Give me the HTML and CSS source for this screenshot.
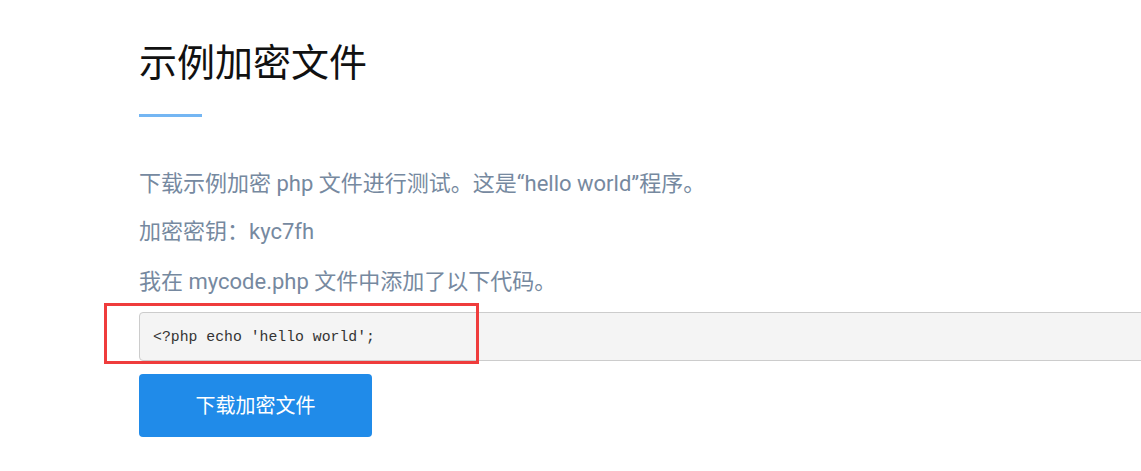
FILE: index.html
```html
<!DOCTYPE html>
<html lang="zh-CN">
<head>
<meta charset="utf-8">
<title>示例加密文件</title>
<link rel="stylesheet" href="styles.css">
</head>
<body>
<main class="section">
  <h1 class="title">示例加密文件</h1>
  <div class="title-bar"></div>
  <p class="text">下载示例加密 php 文件进行测试。这是“hello world”程序。</p>
  <p class="text text-key">加密密钥：kyc7fh</p>
  <p class="text text-last">我在 mycode.php 文件中添加了以下代码。</p>
  <div class="code-wrap">
    <pre class="code">&lt;?php echo 'hello world';</pre>
    <div class="highlight"></div>
  </div>
  <a class="btn" href="#">下载加密文件</a>
</main>
</body>
</html>
```

FILE: styles.css
```css
html, body {
  margin: 0;
  padding: 0;
  background: #ffffff;
  overflow: hidden;
}

body {
  font-family: Roboto, "Noto Sans CJK SC", sans-serif;
}

.section {
  padding: 40px 0 0 139px;
  width: 1100px;
}

.title {
  margin: 0;
  font-size: 38px;
  line-height: 46px;
  font-weight: 400;
  color: #111111;
}

.title-bar {
  margin-top: 28px;
  width: 63px;
  height: 3px;
  background: #74b6f3;
  margin-bottom: 52px;
}

.text {
  margin: 0 0 18px;
  font-size: 22px;
  line-height: 30px;
  color: #7689a0;
}

.text-key {
  margin-bottom: 20px;
}

.text-last {
  margin-bottom: 15px;
}

.code-wrap {
  position: relative;
}

.code {
  margin: 0;
  padding: 14px 13px 12px;
  border: 1px solid #cccccc;
  border-radius: 4px;
  background: #f4f4f4;
  font-family: "Liberation Mono", "DejaVu Sans Mono", monospace;
  font-size: 14.8px;
  line-height: 21px;
  color: #333333;
}

.highlight {
  position: absolute;
  left: -35px;
  top: -9px;
  width: 375px;
  height: 61px;
  box-sizing: border-box;
  border: 3px solid #ef3c3c;
}

.btn {
  display: flex;
  align-items: center;
  justify-content: center;
  margin-top: 13px;
  padding-bottom: 3px;
  box-sizing: border-box;
  width: 233px;
  height: 63px;
  border-radius: 4px;
  background: #208be9;
  color: #ffffff;
  font-size: 20px;
  text-decoration: none;
}
```
